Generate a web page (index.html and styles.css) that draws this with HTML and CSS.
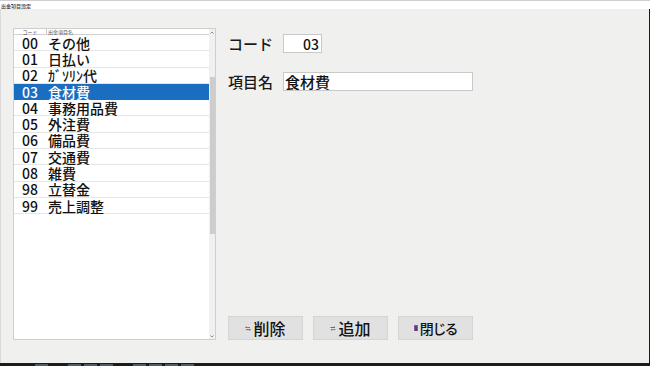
FILE: index.html
```html
<!DOCTYPE html>
<html lang="ja">
<head>
<meta charset="utf-8">
<title>出金項目設定</title>
<link rel="stylesheet" href="styles.css">
</head>
<body>
<div class="win">
  <div class="titlebar"><span class="title">出金項目設定</span></div>
  <div class="body">
    <div class="list">
      <div class="list-content">
        <div class="list-head"><div class="hc hc-code">コード</div><div class="hc hc-name">出金項目名</div></div>
        <div class="row"><span class="c">00</span><span class="n">その他</span></div>
        <div class="row"><span class="c">01</span><span class="n">日払い</span></div>
        <div class="row"><span class="c">02</span><span class="n">ｶﾞｿﾘﾝ代</span></div>
        <div class="row sel"><span class="c">03</span><span class="n">食材費</span></div>
        <div class="row"><span class="c">04</span><span class="n">事務用品費</span></div>
        <div class="row"><span class="c">05</span><span class="n">外注費</span></div>
        <div class="row"><span class="c">06</span><span class="n">備品費</span></div>
        <div class="row"><span class="c">07</span><span class="n">交通費</span></div>
        <div class="row"><span class="c">08</span><span class="n">雑費</span></div>
        <div class="row"><span class="c">98</span><span class="n">立替金</span></div>
        <div class="row"><span class="c">99</span><span class="n">売上調整</span></div>
      </div>
      <div class="scroll">
        <div class="arrow"><svg width="4" height="3" viewBox="0 0 4 3"><path d="M0.5 2.5L2 1L3.5 2.5" fill="none" stroke="#777" stroke-width="0.8"/></svg></div>
        <div class="track"><div class="thumb"></div></div>
        <div class="arrow"><svg width="4" height="3" viewBox="0 0 4 3"><path d="M0.5 0.5L2 2L3.5 0.5" fill="none" stroke="#777" stroke-width="0.8"/></svg></div>
      </div>
    </div>
    <div class="panel">
      <div class="field f1">
        <span class="label">コード</span>
        <div class="input code-input">03</div>
      </div>
      <div class="field f2">
        <span class="label">項目名</span>
        <div class="input name-input">食材費</div>
      </div>
      <div class="buttons">
        <div class="btn"><svg class="ico" width="6" height="5" viewBox="0 0 6 5"><path d="M0.5 1.5H5M0.5 1.5L1.6 0.6" fill="none" stroke="#d24848" stroke-width="0.9"/><path d="M1 3.6H5.5M5.5 3.6L4.4 4.4" fill="none" stroke="#3a5cc8" stroke-width="0.9"/></svg><span>削除</span></div>
        <div class="btn"><svg class="ico" width="6" height="5" viewBox="0 0 6 5"><path d="M0.5 1.5H5M5 1.5L3.9 0.6" fill="none" stroke="#3a5cc8" stroke-width="0.9"/><path d="M1 3.6H5.5M1 3.6L2.1 4.4" fill="none" stroke="#d24848" stroke-width="0.9"/></svg><span>追加</span></div>
        <div class="btn"><svg class="ico" width="4" height="6" viewBox="0 0 4 6"><rect x="0" y="0" width="4" height="6" fill="#8a5aa8"/><rect x="1" y="1" width="2" height="5" fill="#5a3a7a"/></svg><span class="close">閉じる</span></div>
      </div>
    </div>
  </div>
  <div class="taskbar">
    <span class="tb tb1"></span><span class="tb tb2"></span><span class="tb tb3"></span><span class="tb tb3"></span><span class="tb tb4"></span><span class="tb tb3"></span><span class="tb tb3"></span><span class="tb tb3"></span>
  </div>
</div>
</body>
</html>
```

FILE: styles.css
```css
html, body {
  margin: 0;
  padding: 0;
}
body {
  font-family: "Noto Sans CJK JP", "Noto Sans", sans-serif;
  background: #f0f0ee;
}
.win {
  width: 650px;
  height: 366px;
  display: flex;
  flex-direction: column;
  background: #f0f0ee;
  overflow: hidden;
}
.titlebar {
  height: 9px;
  box-sizing: border-box;
  background: #ffffff;
  border-top: 1px solid #cfcfcf;
  display: flex;
  align-items: center;
  padding-left: 1px;
}
.title {
  font-size: 5px;
  line-height: 1;
  color: #333;
  font-weight: 500;
}
.body {
  flex: 1;
  display: flex;
  box-sizing: border-box;
  border-right: 1px solid #1a1a1a;
  border-left: 1px solid #dadada;
  padding: 19px 0 0 12px;
}
.list {
  width: 203px;
  height: 312px;
  box-sizing: border-box;
  border: 1px solid #cfcfcf;
  background: #ffffff;
  display: flex;
}
.list-content {
  flex: 1;
  display: flex;
  flex-direction: column;
}
.list-head {
  height: 6px;
  box-sizing: border-box;
  display: flex;
  border-bottom: 1px solid #d0d0d0;
  font-size: 5px;
  line-height: 5px;
  color: #555;
}
.hc-code {
  width: 32px;
  text-align: center;
  border-right: 1px solid #c8c8c8;
}
.hc-name {
  padding-left: 1px;
}
.row {
  height: 16.3px;
  box-sizing: border-box;
  border-bottom: 1px solid #e6e6e6;
  display: flex;
  align-items: center;
  font-size: 14px;
  line-height: 1;
  color: #111;
  font-weight: 500;
}
.row .c {
  width: 32px;
  text-align: center;
}
.row .n {
  padding-left: 2px;
}
.row.sel {
  background: #1b6dbf;
  color: #ffffff;
  border-bottom-color: #1b6dbf;
}
.scroll {
  width: 6px;
  display: flex;
  flex-direction: column;
  background: #f0f0f0;
}
.arrow {
  height: 6px;
  display: flex;
  align-items: center;
  justify-content: center;
}
.track {
  flex: 1;
  padding-top: 42px;
}
.thumb {
  height: 157px;
  margin: 0 0.5px;
  background: #cdcdcd;
}
.panel {
  margin-left: 12px;
  height: 312px;
  display: flex;
  flex-direction: column;
}
.field {
  display: flex;
  align-items: center;
}
.f1 {
  margin-top: 6px;
}
.f2 {
  margin-top: 19px;
}
.label {
  width: 55px;
  font-size: 15px;
  line-height: 1;
  color: #1a1a1a;
  font-weight: 500;
}
.input {
  height: 19px;
  box-sizing: border-box;
  border: 1px solid #c9c9c9;
  background: #ffffff;
  color: #111;
  display: flex;
  align-items: center;
  line-height: 1;
  font-weight: 500;
}
.code-input {
  width: 39px;
  justify-content: flex-end;
  padding-right: 2px;
  font-size: 14px;
}
.name-input {
  width: 190px;
  padding-left: 1px;
  font-size: 15px;
}
.buttons {
  margin-top: auto;
  display: flex;
  gap: 10px;
}
.btn {
  width: 75px;
  height: 24px;
  box-sizing: border-box;
  background: #e1e1e1;
  border: 1px solid #d4d4d4;
  display: flex;
  align-items: center;
  justify-content: center;
  gap: 2px;
  font-size: 16px;
  line-height: 1;
  color: #111;
  font-weight: 500;
}
.close {
  font-size: 14px;
  font-feature-settings: "palt";
  letter-spacing: -0.5px;
}
.taskbar {
  height: 3px;
  background: #1c1c1c;
  display: flex;
  align-items: flex-end;
}
.tb {
  height: 2px;
  width: 13px;
  background: #4d5c6b;
}
.tb1 { margin-left: 35px; }
.tb2 { margin-left: 20px; }
.tb3 { margin-left: 3px; }
.tb4 { margin-left: 20px; }
```
